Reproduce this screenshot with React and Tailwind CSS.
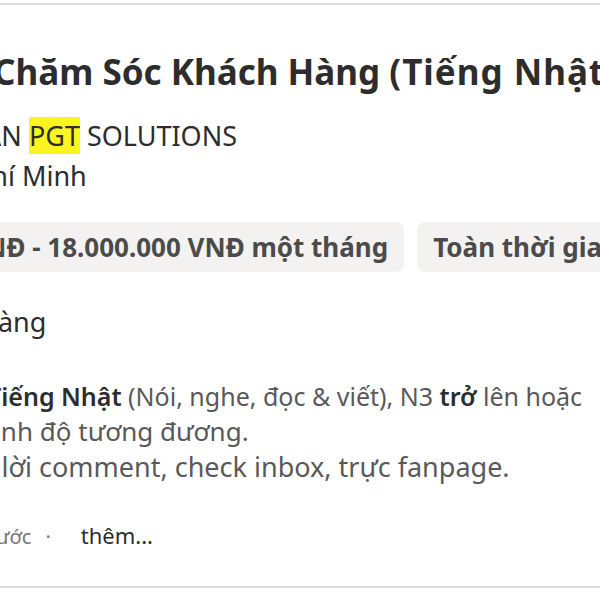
import React from 'react';

const JobCard = () => {
  return (
    <div className="w-[600px] h-[600px] bg-white overflow-hidden pt-[3px]" style={{ fontFamily: '"Noto Sans", "Open Sans", sans-serif' }}>
      <div className="w-full h-[585px] border-y-[2px] border-[#dcdbd9] pt-[45px] overflow-hidden">
        {/* title */}
        <h2 className="-ml-[197px] text-[35px] leading-[44px] font-bold text-[#2d2d2d] whitespace-nowrap">
          Nhân Viên Chăm Sóc Khách Hàng <span className="tracking-[1px]">(Tiếng Nhật)</span>
        </h2>

        {/* company + location */}
        <div className="-ml-[219px] mt-[22px] text-[27px] leading-[40px] text-[#2d2d2d] whitespace-nowrap">
          CÔNG TY CỔ PHẦN <span className="bg-[#fbf51f]">PGT</span> SOLUTIONS
        </div>
        <div className="-ml-[213px] text-[27px] leading-[40px] text-[#2d2d2d] whitespace-nowrap">
          Thành phố Hồ Chí Minh
        </div>

        {/* badges */}
        <div className="-ml-[188px] flex gap-[13px] mt-[26px]">
          <div className="bg-[#f3f2f1] rounded-[8px] h-[50px] px-[16px] flex items-center text-[26px] font-bold text-[#4b4b4b] whitespace-nowrap">
            10.000.000 VNĐ - 18.000.000 VNĐ một tháng
          </div>
          <div className="bg-[#f3f2f1] rounded-[8px] h-[50px] px-[16px] flex items-center text-[26px] font-bold text-[#4b4b4b] whitespace-nowrap">
            Toàn thời gian
          </div>
        </div>

        <div className="-ml-[175px] mt-[32px] text-[27px] leading-[36px] text-[#2d2d2d] whitespace-nowrap">
          Nộp đơn dễ dàng
        </div>

        {/* snippet */}
        <ul className="mt-[39px] leading-[35px] text-[#595959] list-none">
          <li className="whitespace-nowrap">
            <span className="block -ml-[13px] text-[25px]">
              <b className="font-semibold text-[#2d2d2d]">Tiếng Nhật</b> (Nói, nghe, đọc &amp; viết), N3 <b className="font-semibold text-[#2d2d2d]">trở</b> lên hoặc
            </span>
            <span className="block -ml-[26px] text-[26px]">trình độ tương đương.</span>
          </li>
          <li className="whitespace-nowrap -ml-[45px] text-[27px]">
            Trả lời comment, check inbox, trực fanpage.
          </li>
        </ul>

        {/* footer */}
        <div className="-ml-[166px] mt-[35px] h-[30px] flex items-baseline whitespace-nowrap">
          <span className="text-[20px] text-[#767676]">Đăng 30+ ngày trước</span>
          <span className="text-[20px] text-[#767676] ml-[14px]">·</span>
          <span className="text-[22px] text-[#2d2d2d] ml-[30px]">thêm...</span>
        </div>
      </div>
    </div>
  );
};

export default function App() {
  return <JobCard />;
}
